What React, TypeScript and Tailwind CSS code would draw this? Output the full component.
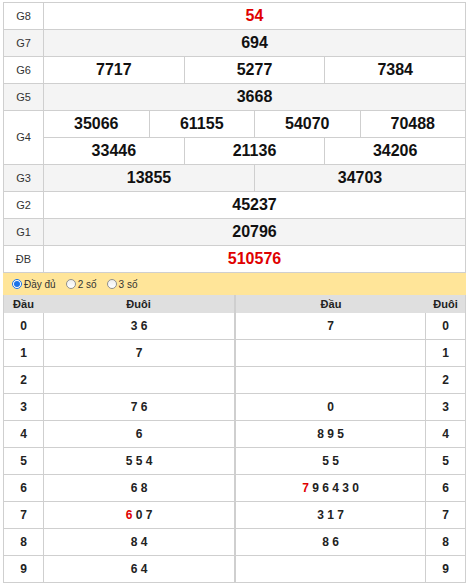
import React from 'react'

type Prize = { label: string; lines: string[][]; red?: boolean }

const prizes: Prize[] = [
  { label: 'G8', lines: [['54']], red: true },
  { label: 'G7', lines: [['694']] },
  { label: 'G6', lines: [['7717', '5277', '7384']] },
  { label: 'G5', lines: [['3668']] },
  { label: 'G4', lines: [['35066', '61155', '54070', '70488'], ['33446', '21136', '34206']] },
  { label: 'G3', lines: [['13855', '34703']] },
  { label: 'G2', lines: [['45237']] },
  { label: 'G1', lines: [['20796']] },
  { label: 'ĐB', lines: [['510576']], red: true },
]

// [red part, rest]
const dau: [string, string][] = [
  ['', '3 6'], ['', '7'], ['', ''], ['', '7 6'], ['', '6'],
  ['', '5 5 4'], ['', '6 8'], ['6', ' 0 7'], ['', '8 4'], ['', '6 4'],
]
const duoi: [string, string][] = [
  ['', '7'], ['', ''], ['', ''], ['', '0'], ['', '8 9 5'],
  ['', '5 5'], ['7', ' 9 6 4 3 0'], ['', '3 1 7'], ['', '8 6'], ['', ''],
]

function Tail({ v }: { v: [string, string] }) {
  return (
    <span className="whitespace-pre">
      {v[0] && <span className="text-[#e00000]">{v[0]}</span>}
      {v[1]}
    </span>
  )
}

function Radio({ checked, label }: { checked?: boolean; label: string }) {
  return (
    <label className="flex items-center gap-[2px]">
      {checked ? (
        <span className="w-[10px] h-[10px] rounded-full border border-[#1a73e8] bg-white flex items-center justify-center">
          <span className="w-[6px] h-[6px] rounded-full bg-[#1a73e8]" />
        </span>
      ) : (
        <span className="w-[10px] h-[10px] rounded-full border border-[#8f8f8f] bg-gradient-to-b from-[#eee] to-white" />
      )}
      <span>{label}</span>
    </label>
  )
}

export default function App() {
  return (
    <div className="min-h-screen bg-white text-[#222]" style={{ fontFamily: '"Liberation Sans", Arial, sans-serif' }}>
      {/* Prize table */}
      <div className="ml-[3px] mt-[2px] w-[463px] border-l border-t border-[#cfcfcf]">
        {prizes.map((p, i) => (
          <div key={p.label} className={`flex ${i % 2 ? 'bg-[#f4f4f4]' : 'bg-white'}`}>
            <div className="w-[40px] shrink-0 border-r border-b border-[#cfcfcf] flex items-center justify-center text-[11px] text-[#333]">
              {p.label}
            </div>
            <div className="flex-1 flex flex-col">
              {p.lines.map((line, j) => (
                <div key={j} className="flex h-[27px]">
                  {line.map(n => (
                    <div
                      key={n}
                      className={`flex-1 border-r border-b border-[#cfcfcf] flex items-center justify-center text-[16px] font-bold ${p.red ? 'text-[#e00000]' : 'text-[#111]'}`}
                    >
                      {n}
                    </div>
                  ))}
                </div>
              ))}
            </div>
          </div>
        ))}
      </div>

      {/* Options bar */}
      <div className="ml-[3px] w-[463px] h-[22px] bg-[#ffe599] flex items-center gap-[10px] pl-[9px] text-[10px] text-[#333]">
        <Radio checked label="Đầy đủ" />
        <Radio label="2 số" />
        <Radio label="3 số" />
      </div>

      {/* Loto tables */}
      <div className="ml-[3px] w-[463px] flex">
        <div className="w-[232px] border-l border-r border-[#cfcfcf]">
          <div className="flex h-[18px] bg-[#dfdfdf] text-[11px] font-bold">
            <div className="w-[39px] flex items-center justify-center">Đầu</div>
            <div className="flex-1 flex items-center justify-center">Đuôi</div>
          </div>
          {dau.map((v, i) => (
            <div key={i} className="flex h-[27px] border-b border-[#cfcfcf] text-[12px] font-bold">
              <div className="w-[40px] border-r border-[#cfcfcf] flex items-center justify-center">{i}</div>
              <div className="flex-1 flex items-center justify-center"><Tail v={v} /></div>
            </div>
          ))}
        </div>
        <div className="w-[231px] border-l border-r border-[#cfcfcf]">
          <div className="flex h-[18px] bg-[#dfdfdf] text-[11px] font-bold">
            <div className="w-[190px] flex items-center justify-center">Đầu</div>
            <div className="flex-1 flex items-center justify-center">Đuôi</div>
          </div>
          {duoi.map((v, i) => (
            <div key={i} className="flex h-[27px] border-b border-[#cfcfcf] text-[12px] font-bold">
              <div className="w-[190px] border-r border-[#cfcfcf] flex items-center justify-center"><Tail v={v} /></div>
              <div className="flex-1 flex items-center justify-center">{i}</div>
            </div>
          ))}
        </div>
      </div>
    </div>
  )
}
